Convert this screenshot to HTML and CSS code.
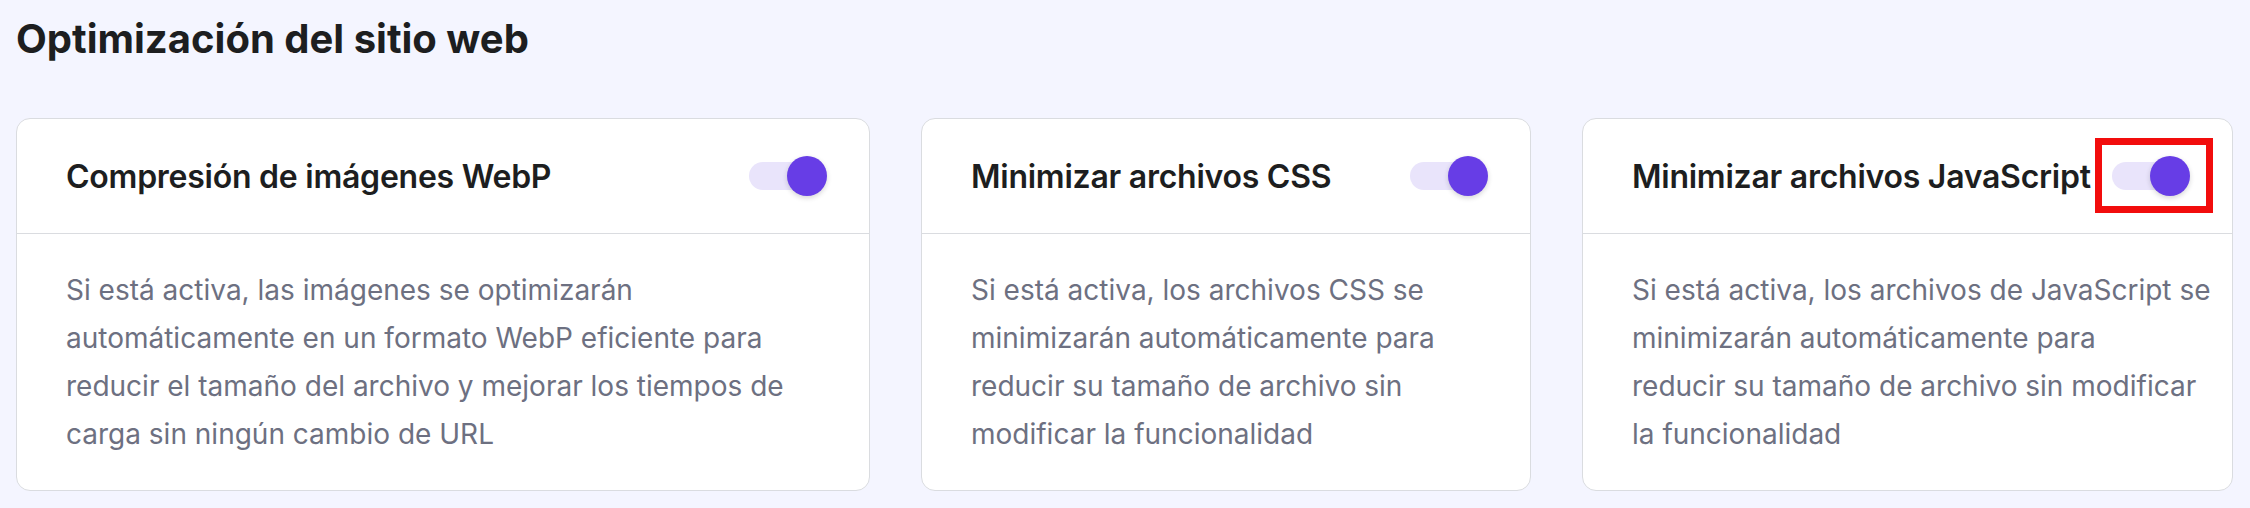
FILE: index.html
```html
<!DOCTYPE html>
<html lang="es">
<head>
  <meta charset="UTF-8">
  <title>Optimización del sitio web</title>
  <link rel="stylesheet" href="styles.css">
</head>
<body>
  <main class="page">
    <h1 class="page-title">Optimización del sitio web</h1>

    <div class="cards">
      <section class="card">
        <header class="card-head">
          <h2 class="card-title">Compresión de imágenes WebP</h2>
          <span class="switch is-on"><span class="track"></span><span class="knob"></span></span>
        </header>
        <p class="card-body">
          Si está activa, las imágenes se optimizarán<br>
          automáticamente en un formato WebP eficiente para<br>
          reducir el tamaño del archivo y mejorar los tiempos de<br>
          carga sin ningún cambio de URL
        </p>
      </section>

      <section class="card">
        <header class="card-head">
          <h2 class="card-title">Minimizar archivos CSS</h2>
          <span class="switch is-on"><span class="track"></span><span class="knob"></span></span>
        </header>
        <p class="card-body">
          Si está activa, los archivos CSS se<br>
          minimizarán automáticamente para<br>
          reducir su tamaño de archivo sin<br>
          modificar la funcionalidad
        </p>
      </section>

      <section class="card">
        <header class="card-head">
          <h2 class="card-title">Minimizar archivos JavaScript</h2>
          <span class="switch is-on is-marked"><span class="track"></span><span class="knob"></span></span>
        </header>
        <p class="card-body">
          Si está activa, los archivos de JavaScript se<br>
          minimizarán automáticamente para<br>
          reducir su tamaño de archivo sin modificar<br>
          la funcionalidad
        </p>
      </section>
    </div>
  </main>
</body>
</html>
```

FILE: styles.css
```css
:root {
  --primary-color: #673de6;
  --primary-light: #e9e4fb;
  --background-color: #f4f5ff;
  --title-color: #1d1e20;
  --text-color: #6d7081;
  --border-color: #dadce0;
}

* {
  box-sizing: border-box;
  margin: 0;
  padding: 0;
}

body {
  font-family: Inter, Roboto, sans-serif;
  background-color: var(--background-color);
  color: var(--title-color);
}

.page {
  padding: 15px 17px 18px 16px;
}

.page-title {
  font-size: 40px;
  line-height: 48px;
  font-weight: 700;
  margin-bottom: 55px;
}

.cards {
  display: grid;
  grid-template-columns: minmax(0, 854fr) minmax(0, 610fr) minmax(0, 651fr);
  column-gap: 51px;
}

.card {
  background-color: #fff;
  border: 1px solid var(--border-color);
  border-radius: 14px;
}

.card-head {
  display: flex;
  align-items: center;
  justify-content: space-between;
  gap: 20px;
  height: 115px;
  padding: 0 42px 0 49px;
  border-bottom: 1px solid var(--border-color);
}

.card-title {
  font-size: 32px;
  font-weight: 600;
  letter-spacing: -0.25px;
  white-space: nowrap;
}

.card-body {
  padding: 32px 20px 32px 49px;
  font-size: 28px;
  line-height: 48px;
  white-space: nowrap;
  color: var(--text-color);
}

/* toggle switch */
.switch {
  position: relative;
  flex: none;
  width: 78px;
  height: 40px;
}

.switch .track {
  position: absolute;
  left: 0;
  top: 6px;
  width: 66px;
  height: 28px;
  border-radius: 14px;
  background-color: var(--primary-light);
}

.switch .knob {
  position: absolute;
  right: 0;
  top: 0;
  width: 40px;
  height: 40px;
  border-radius: 50%;
  background-color: var(--primary-color);
  box-shadow: 0 2px 5px rgba(29, 30, 32, 0.18);
}

.switch.is-marked::after {
  content: "";
  position: absolute;
  left: -17px;
  top: -18px;
  right: -23px;
  bottom: -17px;
  border: 7px solid #f20d0d;
}
```
